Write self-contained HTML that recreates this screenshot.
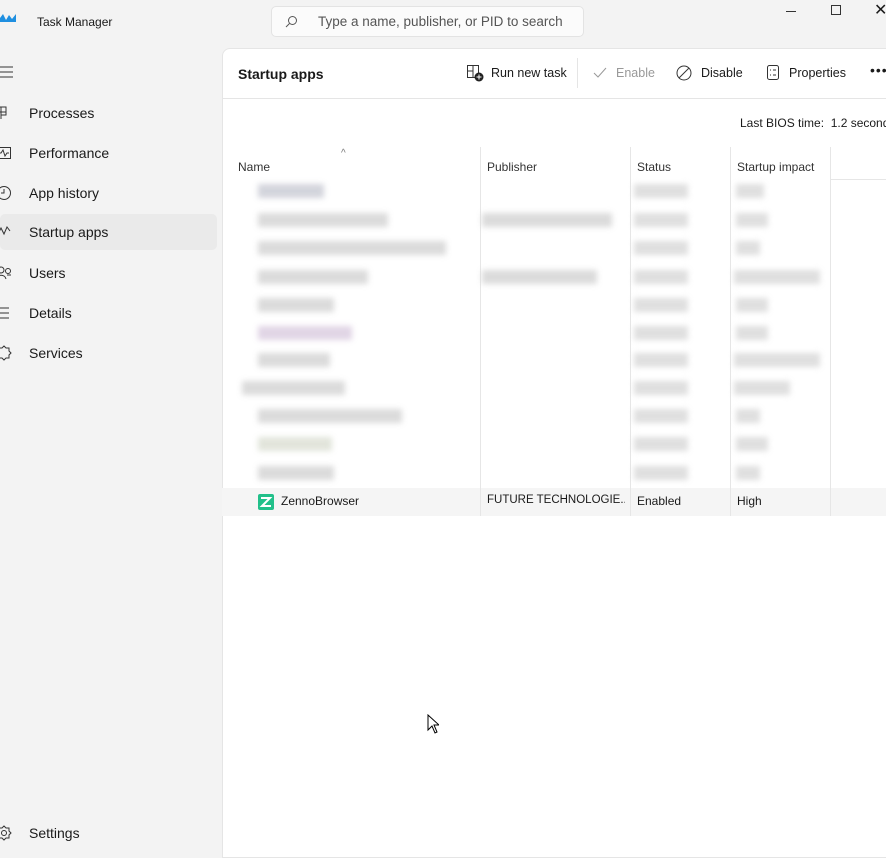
<!DOCTYPE html>
<html><head><meta charset="utf-8"><style>
*{margin:0;padding:0;box-sizing:border-box}
body{width:886px;height:851px;overflow:hidden;background:#f3f3f3;font-family:"Segoe UI","Liberation Sans",sans-serif;font-size:12.5px;color:#1a1a1a;position:relative}
.a{position:absolute;white-space:nowrap}
.nav{position:absolute;left:0;height:36px;width:217px;display:flex;align-items:center;font-size:14px}
.nav span{position:absolute;left:29px}
.nav svg{position:absolute;left:-4px}
.main{position:absolute;left:222px;top:48px;width:680px;height:810px;background:#fff;border-radius:8px 0 0 0;border:1px solid #e5e5e5}
.b{position:absolute;background:#cfcfcf;filter:blur(3px);height:14px;opacity:.75}
.s{position:absolute;background:#d2d2d2;filter:blur(3px);height:14px;opacity:.7}
.hd{position:absolute;top:160px;font-size:12px;color:#333}
.vl{position:absolute;width:1px;background:#e6e6e6}
</style></head><body>
<svg class="a" style="left:0;top:12px" width="16" height="12"><path d="M0 6 L3 2 L6 8 L9 3 L12 7 L16 2 V10 H0Z" fill="#1f8fe0"/></svg>
<div class="a" style="left:37px;top:15px;font-size:12px">Task Manager</div>
<div class="a" style="left:271px;top:6px;width:313px;height:31px;background:#fbfbfb;border:1px solid #e3e3e3;border-radius:5px"></div>
<svg class="a" style="left:285px;top:15px" width="13" height="13"><circle cx="7.5" cy="5.5" r="4" fill="none" stroke="#555"/><path d="M4.5 8.5 L1 12" stroke="#555"/></svg>
<div class="a" style="left:318px;top:14px;font-size:13.5px;color:#555">Type a name, publisher, or PID to search</div>
<div class="a" style="left:786px;top:11px;width:10px;height:1px;background:#333"></div>
<div class="a" style="left:831px;top:5px;width:10px;height:10px;border:1px solid #333"></div>
<div class="a" style="left:874px;top:0px;font-size:16px">✕</div>
<svg class="a" style="left:0;top:66px" width="14" height="12"><path d="M0 1H13M0 6H13M0 11H13" stroke="#333"/></svg>
<div class="nav" style="top:95px"><svg width="14" height="14"><path d="M0 1H10V6H0M5 1V13M5 6H10V9H5" fill="none" stroke="#333"/></svg><span>Processes</span></div>
<div class="nav" style="top:135px"><svg width="16" height="14"><rect x="0.5" y="1.5" width="14" height="11" fill="none" stroke="#333"/><path d="M2 7H5L7 4L9 10L11 7H13" fill="none" stroke="#333"/></svg><span>Performance</span></div>
<div class="nav" style="top:175px"><svg width="16" height="16"><circle cx="8" cy="8" r="6.5" fill="none" stroke="#333"/><path d="M8 4V8H5" fill="none" stroke="#333"/></svg><span>App history</span></div>
<div class="nav" style="top:214px;background:#eaeaea;border-radius:5px"><svg width="16" height="14"><path d="M1 11L5 3L8 9L11 2L14 6" fill="none" stroke="#333"/></svg><span>Startup apps</span></div>
<div class="nav" style="top:255px"><svg width="16" height="16"><circle cx="5" cy="5" r="3" fill="none" stroke="#333"/><circle cx="12" cy="6" r="2.5" fill="none" stroke="#333"/><path d="M0 14C1 9 9 9 10 14M11 10H15" fill="none" stroke="#333"/></svg><span>Users</span></div>
<div class="nav" style="top:295px"><svg width="14" height="12"><path d="M0 1H13M0 6H13M0 11H13" stroke="#333"/></svg><span>Details</span></div>
<div class="nav" style="top:335px"><svg width="16" height="16"><path d="M8 1L10 3L13 3L13 6L15 8L13 10L13 13L10 13L8 15L6 13L3 13L3 10L1 8L3 6L3 3L6 3Z" fill="none" stroke="#333"/></svg><span>Services</span></div>
<div class="nav" style="top:815px"><svg width="16" height="16"><circle cx="8" cy="8" r="2.5" fill="none" stroke="#333"/><path d="M8 1L10 3L13 3L13 6L15 8L13 10L13 13L10 13L8 15L6 13L3 13L3 10L1 8L3 6L3 3L6 3Z" fill="none" stroke="#333"/></svg><span>Settings</span></div>

<div class="main"></div>
<div class="a" style="left:222px;top:98px;width:664px;height:1px;background:#e5e5e5"></div>
<div class="a" style="left:238px;top:66px;font-size:14px;font-weight:600">Startup apps</div>
<svg class="a" style="left:467px;top:65px" width="17" height="17"><rect x="0.5" y="0.5" width="11" height="12" fill="none" stroke="#333"/><path d="M0.5 6H6M6 .5V12" stroke="#333"/><circle cx="12" cy="12" r="4.5" fill="#222"/><path d="M12 9.5V14.5M9.5 12H14.5" stroke="#fff"/></svg>
<div class="a" style="left:491px;top:66px">Run new task</div>
<div class="a" style="left:577px;top:58px;width:1px;height:30px;background:#e5e5e5"></div>
<svg class="a" style="left:593px;top:67px" width="14" height="12"><path d="M1 6L5 10L13 1" fill="none" stroke="#999"/></svg>
<div class="a" style="left:616px;top:66px;color:#999">Enable</div>
<svg class="a" style="left:676px;top:65px" width="16" height="16"><circle cx="8" cy="8" r="7" fill="none" stroke="#333"/><path d="M3 13L13 3" stroke="#333"/></svg>
<div class="a" style="left:701px;top:66px">Disable</div>
<svg class="a" style="left:767px;top:65px" width="12" height="16"><rect x="0.5" y="0.5" width="11" height="14" rx="2" fill="none" stroke="#333"/><path d="M3 5H4M6 5H9M3 10H4M6 10H9" stroke="#333"/></svg>
<div class="a" style="left:789px;top:66px">Properties</div>
<div class="a" style="left:870px;top:62px;font-size:14px;letter-spacing:1px">•••</div>
<div class="a" style="left:740px;top:116px;font-size:12px">Last BIOS time:&nbsp; 1.2 seconds</div>

<div class="hd" style="left:238px">Name</div>
<div class="a" style="left:341px;top:148px;font-size:10px;color:#777">^</div>
<div class="hd" style="left:487px">Publisher</div>
<div class="hd" style="left:637px">Status</div>
<div class="hd" style="left:737px">Startup impact</div>
<div class="vl" style="left:480px;top:147px;height:368px"></div>
<div class="vl" style="left:630px;top:147px;height:368px"></div>
<div class="vl" style="left:730px;top:147px;height:368px"></div>
<div class="vl" style="left:830px;top:147px;height:368px"></div>
<div class="a" style="left:830px;top:179px;width:56px;height:1px;background:#e6e6e6"></div>

<div class="b" style="left:258px;top:184px;width:66px;background:#c4c6d0"></div>
<div class="b" style="left:258px;top:213px;width:130px"></div><div class="b" style="left:482px;top:213px;width:130px"></div>
<div class="b" style="left:258px;top:241px;width:188px"></div>
<div class="b" style="left:258px;top:270px;width:110px"></div><div class="b" style="left:482px;top:270px;width:115px"></div>
<div class="b" style="left:258px;top:298px;width:76px"></div>
<div class="b" style="left:258px;top:326px;width:94px;background:#d7c7dd"></div>
<div class="b" style="left:258px;top:353px;width:72px"></div>
<div class="b" style="left:242px;top:381px;width:103px"></div>
<div class="b" style="left:258px;top:409px;width:144px"></div>
<div class="b" style="left:258px;top:437px;width:74px;background:#d8dccf"></div>
<div class="b" style="left:258px;top:466px;width:76px"></div>

<div class="s" style="left:634px;top:184px;width:54px"></div><div class="s" style="left:736px;top:184px;width:28px"></div>
<div class="s" style="left:634px;top:213px;width:54px"></div><div class="s" style="left:736px;top:213px;width:32px"></div>
<div class="s" style="left:634px;top:241px;width:54px"></div><div class="s" style="left:736px;top:241px;width:24px"></div>
<div class="s" style="left:634px;top:270px;width:54px"></div><div class="s" style="left:734px;top:270px;width:86px"></div>
<div class="s" style="left:634px;top:298px;width:54px"></div><div class="s" style="left:736px;top:298px;width:32px"></div>
<div class="s" style="left:634px;top:326px;width:54px"></div><div class="s" style="left:736px;top:326px;width:32px"></div>
<div class="s" style="left:634px;top:353px;width:54px"></div><div class="s" style="left:734px;top:353px;width:86px"></div>
<div class="s" style="left:634px;top:381px;width:54px"></div><div class="s" style="left:734px;top:381px;width:56px"></div>
<div class="s" style="left:634px;top:409px;width:54px"></div><div class="s" style="left:736px;top:409px;width:24px"></div>
<div class="s" style="left:634px;top:437px;width:54px"></div><div class="s" style="left:736px;top:437px;width:32px"></div>
<div class="s" style="left:634px;top:466px;width:54px"></div><div class="s" style="left:736px;top:466px;width:24px"></div>

<div class="a" style="left:222px;top:488px;width:664px;height:28px;background:#f5f5f5"></div>
<div class="vl" style="left:480px;top:488px;height:28px"></div><div class="vl" style="left:630px;top:488px;height:28px"></div><div class="vl" style="left:730px;top:488px;height:28px"></div><div class="vl" style="left:830px;top:488px;height:28px"></div>
<svg class="a" style="left:258px;top:494px" width="16" height="16"><rect width="16" height="16" rx="2" fill="#22c08a"/><path d="M3 4H12L4 12H13" fill="none" stroke="#fff" stroke-width="2"/></svg>
<div class="a" style="left:281px;top:494px;font-size:12px">ZennoBrowser</div>
<div class="a" style="left:487px;top:494px;font-size:11.5px;width:138px;overflow:hidden">FUTURE TECHNOLOGIE...</div>
<div class="a" style="left:637px;top:494px;font-size:12px">Enabled</div>
<div class="a" style="left:737px;top:494px;font-size:12px">High</div>
<svg class="a" style="left:427px;top:714px" width="12" height="20"><path d="M1 1V16L5 12L8 19L10 18L7 11H12Z" fill="#fff" stroke="#000"/></svg>
</body></html>
